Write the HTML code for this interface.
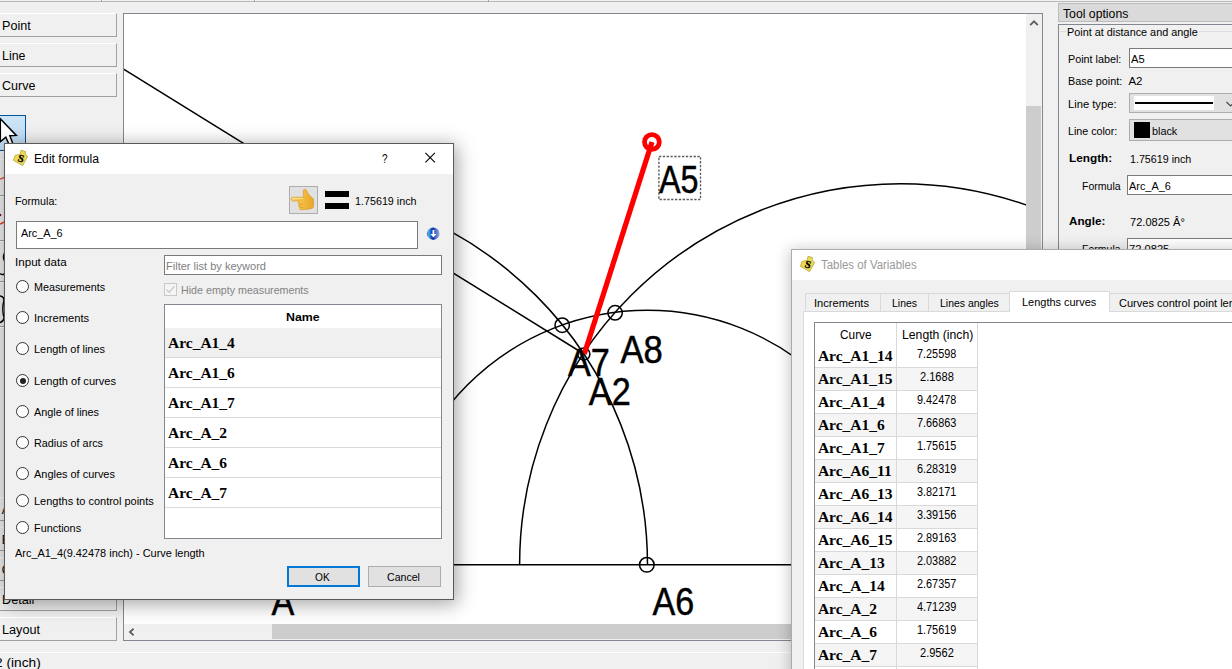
<!DOCTYPE html>
<html lang="en">
<head>
<meta charset="utf-8">
<title>Edit formula</title>
<style>
html,body{margin:0;padding:0;background:#f0f0f0;}
body{width:1232px;height:669px;overflow:hidden;background:#f0f0f0;position:relative;
  font-family:"Liberation Sans",sans-serif;font-size:12px;color:#000;}
.a{position:absolute;box-sizing:border-box;}
.t{position:absolute;white-space:nowrap;line-height:1;transform-origin:0 50%;}
.b{font-weight:bold;}
.ser{font-family:"Liberation Serif",serif;font-weight:bold;}
.tab{position:absolute;left:-2px;width:119px;height:24px;box-sizing:border-box;background:#f0f0f0;
  border-top:1px solid #fff;border-left:1px solid #fff;border-right:1px solid #a0a0a0;border-bottom:1px solid #a0a0a0;}
.inp{position:absolute;box-sizing:border-box;background:#fff;border:1px solid #7a7a7a;}
.radio{position:absolute;width:13px;height:13px;box-sizing:border-box;border:1px solid #333;border-radius:50%;background:#fff;left:16px;}
.hl{position:absolute;height:1px;background:#d9d9d9;}
</style>
</head>
<body>
<!-- main window -->
<div class="a" style="left:0;top:1px;width:1232px;height:1px;background:#b9b9b9;"></div>
<div class="a" style="left:101px;top:0;width:1px;height:2px;background:#a0a0a0;"></div><div class="a" style="left:102px;top:0;width:1px;height:1px;background:#fff;"></div>
<div class="a" style="left:254px;top:0;width:1px;height:2px;background:#a0a0a0;"></div><div class="a" style="left:255px;top:0;width:1px;height:1px;background:#fff;"></div>
<div class="a" style="left:488px;top:0;width:1px;height:2px;background:#a0a0a0;"></div><div class="a" style="left:489px;top:0;width:1px;height:1px;background:#fff;"></div>
<div class="tab" style="top:13px;"></div>
<div class="tab" style="top:43px;"></div>
<div class="tab" style="top:73px;"></div>
<div class="tab" style="top:497px;"></div>
<div class="tab" style="top:527px;"></div>
<div class="tab" style="top:557px;"></div>
<div class="tab" style="top:587px;"></div>
<div class="tab" style="top:617px;"></div>
<div class="a" style="left:-2px;top:115px;width:28px;height:36px;background:linear-gradient(#cce4f7,#c2dcf3);border:1px solid #00559b;"></div>
<svg class="a" style="left:0;top:114px;" width="20" height="34" viewBox="0 114 20 34"><path d="M0.3 118.8 L16.3 135.4 L9.9 135.8 L13.3 145 L9.3 145 L5.8 137.2 L0.3 141.8 Z" fill="#fff" stroke="#000" stroke-width="1.5" stroke-linejoin="miter"/></svg>
<div class="a" style="left:0;top:159px;width:6px;height:1px;background:#fbfbfb;"></div>
<div class="a" style="left:0;top:195px;width:6px;height:1px;background:#a0a0a0;"></div><div class="a" style="left:0;top:196px;width:6px;height:1px;background:#fff;"></div>
<div class="a" style="left:0;top:240px;width:6px;height:1px;background:#a0a0a0;"></div><div class="a" style="left:0;top:241px;width:6px;height:1px;background:#fff;"></div>
<div class="a" style="left:0;top:281px;width:6px;height:1px;background:#a0a0a0;"></div><div class="a" style="left:0;top:282px;width:6px;height:1px;background:#fff;"></div>
<div class="a" style="left:0;top:326px;width:6px;height:1px;background:#a0a0a0;"></div><div class="a" style="left:0;top:327px;width:6px;height:1px;background:#fff;"></div>
<svg class="a" style="left:0;top:150px;" width="6" height="190" viewBox="0 150 6 190"><g fill="none" stroke-width="1.4"><path d="M-1 179.4 Q2 178.6 5 177" stroke="#e8401c"/><path d="M-1 224.4 Q2 223.6 5 221.4" stroke="#e8401c"/><circle cx="0" cy="215" r="1.3" fill="#7a1010" stroke="none"/><path d="M4.5 253 Q2.5 257 4.5 261" stroke="#000"/><path d="M-1 273 Q2 275.5 5 274" stroke="#000"/><path d="M-1 296 Q3.5 296 4 300 Q1.5 310 4.2 318 Q3 322.5 -1 322.5" stroke="#000"/></g></svg>
<div class="t" style="left:1.8px;top:20.3px;font-size:12px;transform:scaleX(1.049);">Point</div>
<div class="t" style="left:1.8px;top:50.3px;font-size:12px;transform:scaleX(1.031);">Line</div>
<div class="t" style="left:1.8px;top:80.3px;font-size:12px;transform:scaleX(1.043);">Curve</div>
<div class="t" style="left:1.8px;top:504.3px;font-size:12px;">Arc</div>
<div class="t" style="left:1.8px;top:534.3px;font-size:12px;">Elliptical Arc</div>
<div class="t" style="left:1.8px;top:564.3px;font-size:12px;">Operations</div>
<div class="t" style="left:1.8px;top:594.3px;font-size:12px;transform:scaleX(1.056);">Detail</div>
<div class="t" style="left:1.8px;top:624.3px;font-size:12px;transform:scaleX(1.055);">Layout</div>
<div class="t" style="left:-5.2px;top:657.3px;font-size:12px;transform:scaleX(1.142);">2 (inch)</div>
<div class="a" id="canvas" style="left:123px;top:13px;width:920px;height:628px;background:#fff;border:1px solid #828790;overflow:hidden;"><svg class="a" style="left:0;top:0;" width="918" height="626" viewBox="124 14 918 626">
  <g fill="none" stroke="#000" stroke-width="1.5">
    <line x1="200" y1="564.8" x2="1000" y2="564.8"/>
    <line x1="60" y1="29.8" x2="584" y2="354"/>
    <path d="M647.5 564.7 A380.5 380.5 0 0 0 267 184.2"/>
    <path d="M519.6 564.7 A381 381 0 0 1 1281.6 564.7"/>
    <path d="M393.1 564.7 A254.4 254.4 0 0 1 901.9 564.7"/>
    <circle cx="646.8" cy="564.8" r="7.3"/>
    <circle cx="562.2" cy="325.2" r="7.2"/>
    <circle cx="615.1" cy="312.8" r="7.2"/>
    <circle cx="583.8" cy="354" r="6.1"/>
  </g>
  <line x1="584.3" y1="354" x2="652" y2="142" stroke="#f00" stroke-width="5.2"/>
  <circle cx="651.9" cy="142" r="7.4" fill="none" stroke="#f00" stroke-width="4.8"/>
  <rect x="658.9" y="156.5" width="41.6" height="43" fill="none" stroke="#5a5a5a" stroke-width="1.35" stroke-dasharray="2.3 1.55"/>
  <g font-family="'Liberation Sans',sans-serif" font-size="38.5" fill="#000" stroke="#000" stroke-width="0.5">
    <text x="659" y="192.7" textLength="39.5" lengthAdjust="spacingAndGlyphs">A5</text>
    <text x="567.9" y="375.6" textLength="41.9" lengthAdjust="spacingAndGlyphs">A7</text>
    <text x="620.5" y="362.6" textLength="42.3" lengthAdjust="spacingAndGlyphs">A8</text>
    <text x="588.8" y="404.7" textLength="41.9" lengthAdjust="spacingAndGlyphs">A2</text>
    <text x="652.6" y="614.7" textLength="41.7" lengthAdjust="spacingAndGlyphs">A6</text>
    <text x="271.4" y="614.9" textLength="22.8" lengthAdjust="spacingAndGlyphs">A</text>
  </g>
</svg>
<div class="a" style="left:902px;top:0;width:16px;height:610px;background:#f0f0f0;"></div>
<div class="a" style="left:902px;top:92px;width:15px;height:500px;background:#cdcdcd;"></div>
<svg class="a" style="left:902px;top:0;" width="16" height="17" viewBox="0 0 16 17"><path d="M4.2 11.2 L8 7.4 L11.8 11.2" fill="none" stroke="#606060" stroke-width="1.9"/></svg>
<div class="a" style="left:0;top:610px;width:918px;height:16px;background:#f0f0f0;"></div>
<div class="a" style="left:148px;top:610px;width:700px;height:15px;background:#cdcdcd;"></div>
<svg class="a" style="left:0;top:610px;" width="17" height="16" viewBox="0 0 17 16"><path d="M9.6 4.6 L6 8 L9.6 11.4" fill="none" stroke="#606060" stroke-width="1.9"/></svg>
</div>
<div class="a" style="left:0;top:652px;width:1232px;height:1px;background:#fff;"></div>
<!-- right panel -->
<div class="a" style="left:1058px;top:3px;width:180px;height:19px;background:#dadada;border:1px solid #bcbcbc;"></div>
<div class="a" style="left:1058px;top:24px;width:180px;height:400px;border:1px solid #828790;"></div>
<div class="hl" style="left:1060px;top:31px;width:6px;background:#dcdcdc;"></div><div class="hl" style="left:1199px;top:31px;width:40px;background:#dcdcdc;"></div>
<div class="inp" style="left:1129px;top:48px;width:110px;height:20px;"></div>
<div class="a" style="left:1129px;top:93px;width:110px;height:20px;background:#e1e1e1;border:1px solid #adadad;"></div>
<div class="a" style="left:1134px;top:96px;width:80px;height:14px;background:#fff;"></div>
<div class="a" style="left:1135px;top:102px;width:78px;height:2px;background:#000;"></div>
<svg class="a" style="left:1224.5px;top:99px;" width="10" height="10" viewBox="0 0 10 10"><path d="M1.5 3 L5.5 7 L9.5 3" fill="none" stroke="#444" stroke-width="1.1"/></svg>
<div class="a" style="left:1129px;top:119px;width:110px;height:22px;background:#e1e1e1;border:1px solid #adadad;"></div>
<div class="a" style="left:1134px;top:122px;width:16px;height:16px;background:#000;"></div>
<div class="inp" style="left:1127px;top:175px;width:110px;height:20px;"></div>
<div class="inp" style="left:1127px;top:238px;width:110px;height:20px;"></div>
<div class="t" style="left:1063.3px;top:8.3px;font-size:12px;transform:scaleX(1.020);">Tool options</div>
<div class="t" style="left:1067.1px;top:26.5px;font-size:11.5px;transform:scaleX(0.942);">Point at distance and angle</div>
<div class="t" style="left:1068.1px;top:53.5px;font-size:11.5px;transform:scaleX(0.938);">Point label:</div>
<div class="t" style="left:1131.3px;top:53.5px;font-size:11.5px;transform:scaleX(0.970);">A5</div>
<div class="t" style="left:1068.1px;top:75.5px;font-size:11.5px;transform:scaleX(0.944);">Base point:</div>
<div class="t" style="left:1128.4px;top:75.5px;font-size:11.5px;">A2</div>
<div class="t" style="left:1068.0px;top:98.5px;font-size:11.5px;transform:scaleX(0.973);">Line type:</div>
<div class="t" style="left:1068.1px;top:125.6px;font-size:11.5px;transform:scaleX(0.930);">Line color:</div>
<div class="t" style="left:1152.2px;top:125.6px;font-size:11.5px;transform:scaleX(0.940);">black</div>
<div class="t b" style="left:1068.5px;top:152.6px;font-size:11.5px;transform:scaleX(1.026);">Length:</div>
<div class="t" style="left:1129.6px;top:153.6px;font-size:11.5px;transform:scaleX(0.930);">1.75619 inch</div>
<div class="t" style="left:1082.0px;top:180.6px;font-size:11.5px;transform:scaleX(0.916);">Formula</div>
<div class="t" style="left:1129.3px;top:180.6px;font-size:11.5px;transform:scaleX(0.949);">Arc_A_6</div>
<div class="t b" style="left:1068.5px;top:215.6px;font-size:11.5px;transform:scaleX(1.016);">Angle:</div>
<div class="t" style="left:1129.5px;top:216.6px;font-size:11.5px;transform:scaleX(0.963);">72.0825 Â°</div>
<div class="t" style="left:1082.0px;top:243.6px;font-size:11.5px;transform:scaleX(0.916);">Formula</div>
<div class="t" style="left:1129.2px;top:243.6px;font-size:11.5px;transform:scaleX(0.970);">72.0825</div>
<!-- Tables of Variables -->
<div class="a" style="left:791px;top:249px;width:460px;height:440px;background:#f0f0f0;border:1px solid #ababab;box-shadow:0 2px 14px 1px rgba(0,0,0,0.24);"></div>
<div class="a" style="left:792px;top:250px;width:460px;height:30px;background:#fff;"></div>
<svg class="a" style="left:797px;top:252px;" width="22" height="22" viewBox="0 0 22 22">
<path d="M11.1 4.3 L15.4 5.6 L15.2 8.4 L17.6 10.4 L12.6 19.6 L3.4 14.3 L5.2 9.3 L10 8.6 Z" fill="#efdb52" stroke="#b3a235" stroke-width="0.8" stroke-linejoin="round"/>
<text x="8.2" y="16" font-family="'Liberation Serif',serif" font-weight="bold" font-size="10.5" fill="#000" stroke="#000" stroke-width="0.35" transform="rotate(16 11 12.6)">S</text>
</svg>
<div class="a" style="left:803px;top:311px;width:440px;height:371px;background:#fff;border:1px solid #d9d9d9;"></div>
<div class="a" style="left:805px;top:293px;width:76px;height:19px;background:#f0f0f0;border:1px solid #d9d9d9;"></div>
<div class="a" style="left:880px;top:293px;width:49px;height:19px;background:#f0f0f0;border:1px solid #d9d9d9;"></div>
<div class="a" style="left:928px;top:293px;width:82px;height:19px;background:#f0f0f0;border:1px solid #d9d9d9;"></div>
<div class="a" style="left:1109px;top:293px;width:140px;height:19px;background:#f0f0f0;border:1px solid #d9d9d9;"></div>
<div class="a" style="left:1009px;top:291px;width:101px;height:21px;background:#fff;border:1px solid #d9d9d9;border-bottom:none;"></div>
<div class="a" style="left:814px;top:322px;width:430px;height:360px;background:#fff;border:1px solid #828790;"></div>
<div class="hl" style="left:815px;top:367px;width:163px;"></div>
<div class="a" style="left:815px;top:368px;width:162px;height:23px;background:#f5f5f5;"></div>
<div class="hl" style="left:815px;top:390px;width:163px;"></div>
<div class="hl" style="left:815px;top:413px;width:163px;"></div>
<div class="a" style="left:815px;top:414px;width:162px;height:23px;background:#f5f5f5;"></div>
<div class="hl" style="left:815px;top:436px;width:163px;"></div>
<div class="hl" style="left:815px;top:459px;width:163px;"></div>
<div class="a" style="left:815px;top:460px;width:162px;height:23px;background:#f5f5f5;"></div>
<div class="hl" style="left:815px;top:482px;width:163px;"></div>
<div class="hl" style="left:815px;top:505px;width:163px;"></div>
<div class="a" style="left:815px;top:506px;width:162px;height:23px;background:#f5f5f5;"></div>
<div class="hl" style="left:815px;top:528px;width:163px;"></div>
<div class="hl" style="left:815px;top:551px;width:163px;"></div>
<div class="a" style="left:815px;top:552px;width:162px;height:23px;background:#f5f5f5;"></div>
<div class="hl" style="left:815px;top:574px;width:163px;"></div>
<div class="hl" style="left:815px;top:597px;width:163px;"></div>
<div class="a" style="left:815px;top:598px;width:162px;height:23px;background:#f5f5f5;"></div>
<div class="hl" style="left:815px;top:620px;width:163px;"></div>
<div class="hl" style="left:815px;top:643px;width:163px;"></div>
<div class="a" style="left:815px;top:644px;width:162px;height:23px;background:#f5f5f5;"></div>
<div class="hl" style="left:815px;top:666px;width:163px;"></div>
<div class="a" style="left:896px;top:323px;width:1px;height:346px;background:#d9d9d9;"></div>
<div class="a" style="left:977px;top:323px;width:1px;height:346px;background:#d9d9d9;"></div>
<div class="t" style="left:820.7px;top:259.3px;font-size:12px;transform:scaleX(0.952);color:#999;">Tables of Variables</div>
<div class="t" style="left:814.0px;top:297.6px;font-size:11.5px;transform:scaleX(0.966);">Increments</div>
<div class="t" style="left:891.8px;top:297.6px;font-size:11.5px;transform:scaleX(0.911);">Lines</div>
<div class="t" style="left:939.8px;top:297.6px;font-size:11.5px;transform:scaleX(0.911);">Lines angles</div>
<div class="t" style="left:1021.5px;top:296.6px;font-size:11.5px;transform:scaleX(0.953);">Lengths curves</div>
<div class="t" style="left:1119.0px;top:297.6px;font-size:11.5px;transform:scaleX(0.959);">Curves control point lengths</div>
<div class="t" style="left:840.0px;top:329.3px;font-size:12px;transform:scaleX(0.987);">Curve</div>
<div class="t" style="left:901.7px;top:329.3px;font-size:12px;transform:scaleX(1.018);">Length (inch)</div>
<div class="t ser" style="left:817.9px;top:348.1px;font-size:15.5px;">Arc_A1_14</div>
<div class="t" style="left:917.0px;top:348.3px;font-size:12px;transform:scaleX(0.906);">7.25598</div>
<div class="t ser" style="left:817.9px;top:371.1px;font-size:15.5px;">Arc_A1_15</div>
<div class="t" style="left:919.7px;top:371.3px;font-size:12px;transform:scaleX(0.921);">2.1688</div>
<div class="t ser" style="left:817.9px;top:394.1px;font-size:15.5px;">Arc_A1_4</div>
<div class="t" style="left:917.0px;top:394.3px;font-size:12px;transform:scaleX(0.906);">9.42478</div>
<div class="t ser" style="left:817.9px;top:417.1px;font-size:15.5px;">Arc_A1_6</div>
<div class="t" style="left:917.0px;top:417.3px;font-size:12px;transform:scaleX(0.906);">7.66863</div>
<div class="t ser" style="left:817.9px;top:440.1px;font-size:15.5px;">Arc_A1_7</div>
<div class="t" style="left:917.0px;top:440.3px;font-size:12px;transform:scaleX(0.906);">1.75615</div>
<div class="t ser" style="left:817.9px;top:463.1px;font-size:15.5px;">Arc_A6_11</div>
<div class="t" style="left:917.0px;top:463.3px;font-size:12px;transform:scaleX(0.906);">6.28319</div>
<div class="t ser" style="left:817.9px;top:486.1px;font-size:15.5px;">Arc_A6_13</div>
<div class="t" style="left:917.0px;top:486.3px;font-size:12px;transform:scaleX(0.906);">3.82171</div>
<div class="t ser" style="left:817.9px;top:509.0px;font-size:15.5px;">Arc_A6_14</div>
<div class="t" style="left:917.0px;top:509.3px;font-size:12px;transform:scaleX(0.906);">3.39156</div>
<div class="t ser" style="left:817.9px;top:532.0px;font-size:15.5px;">Arc_A6_15</div>
<div class="t" style="left:917.0px;top:532.3px;font-size:12px;transform:scaleX(0.906);">2.89163</div>
<div class="t ser" style="left:817.9px;top:555.0px;font-size:15.5px;">Arc_A_13</div>
<div class="t" style="left:917.0px;top:555.3px;font-size:12px;transform:scaleX(0.906);">2.03882</div>
<div class="t ser" style="left:817.9px;top:578.0px;font-size:15.5px;">Arc_A_14</div>
<div class="t" style="left:917.0px;top:578.3px;font-size:12px;transform:scaleX(0.906);">2.67357</div>
<div class="t ser" style="left:817.9px;top:601.0px;font-size:15.5px;">Arc_A_2</div>
<div class="t" style="left:917.0px;top:601.3px;font-size:12px;transform:scaleX(0.906);">4.71239</div>
<div class="t ser" style="left:817.9px;top:624.0px;font-size:15.5px;">Arc_A_6</div>
<div class="t" style="left:917.0px;top:624.3px;font-size:12px;transform:scaleX(0.906);">1.75619</div>
<div class="t ser" style="left:817.9px;top:647.0px;font-size:15.5px;">Arc_A_7</div>
<div class="t" style="left:919.7px;top:647.3px;font-size:12px;transform:scaleX(0.921);">2.9562</div>
<!-- Edit formula dialog -->
<div class="a" style="left:4px;top:143px;width:450px;height:457px;background:#f0f0f0;border:1px solid #5a5a5a;box-shadow:2px 3px 18px 1px rgba(0,0,0,0.36);"></div>
<div class="a" style="left:5px;top:144px;width:448px;height:30px;background:#fff;"></div>
<svg class="a" style="left:10px;top:146px;" width="22" height="22" viewBox="0 0 22 22">
<path d="M11.1 4.3 L15.4 5.6 L15.2 8.4 L17.6 10.4 L12.6 19.6 L3.4 14.3 L5.2 9.3 L10 8.6 Z" fill="#efdb52" stroke="#b3a235" stroke-width="0.8" stroke-linejoin="round"/>
<text x="8.2" y="16" font-family="'Liberation Serif',serif" font-weight="bold" font-size="10.5" fill="#000" stroke="#000" stroke-width="0.35" transform="rotate(16 11 12.6)">S</text>
</svg>
<div class="t" style="left:381.9px;top:151.8px;font-size:13.5px;transform:scaleX(0.74);">?</div>
<svg class="a" style="left:425px;top:152px;" width="11" height="11" viewBox="0 0 11 11"><path d="M0.4 0.9 L9.9 10.4 M9.9 0.9 L0.4 10.4" stroke="#000" stroke-width="1.1" fill="none"/></svg>
<div class="a" style="left:289px;top:186px;width:29px;height:28px;background:#e1e1e1;border:1px solid #adadad;"></div>
<svg class="a" style="left:289px;top:186px;" width="29" height="28" viewBox="289 186 29 28">
<defs><linearGradient id="hg" x1="0" y1="0" x2="1" y2="0"><stop offset="0" stop-color="#f9d468"/><stop offset="0.55" stop-color="#f2bb3e"/><stop offset="1" stop-color="#e9a52c"/></linearGradient></defs>
<path d="M291.2 199 C291.2 197.7 292 197.2 293 197.2 L303.6 197.2 L303.2 192 C303 190 304 189 305 189.2 C306.5 189.6 307 191.5 308 193.5 L310 196 C312 197.5 313.6 198.5 313.6 200 L313.6 206.5 C313.6 208 312 208.6 309 209 L301 209.8 C299.6 209.8 299.4 208.2 300 207.4 C298.4 207 298.2 205.2 299 204.4 C297.8 203.8 297.8 201.8 299.4 201 L293 201 C292 201 291.2 200.4 291.2 199 Z" fill="url(#hg)" stroke="#d99a2b" stroke-width="0.7"/>
<path d="M292.4 198.4 L303 198.4" stroke="#fde59a" stroke-width="0.9" fill="none"/>
<path d="M298.8 204.3 L302.6 204.3 M299.8 207.3 L303 207.3" stroke="#d39227" stroke-width="0.7" fill="none"/>
</svg>
<div class="a" style="left:325px;top:191px;width:24px;height:6px;background:#000;"></div>
<div class="a" style="left:325px;top:203px;width:24px;height:6px;background:#000;"></div>
<div class="inp" style="left:16px;top:221px;width:402px;height:28px;"></div>
<svg class="a" style="left:425px;top:225px;" width="17" height="17" viewBox="425 225 17 17">
<defs><linearGradient id="bg" x1="0" y1="0" x2="1" y2="0"><stop offset="0" stop-color="#1a3aa8"/><stop offset="0.13" stop-color="#3fc0f0"/><stop offset="0.32" stop-color="#1e56c2"/><stop offset="0.5" stop-color="#0d2ba0"/><stop offset="0.62" stop-color="#3a62c8"/><stop offset="1" stop-color="#9aa6dc"/></linearGradient></defs>
<circle cx="433.3" cy="233.7" r="6.2" fill="url(#bg)"/>
<path d="M432.5 230 L434.3 230 L434.3 234 L436.4 234 L433.4 237.6 L430.4 234 L432.5 234 Z" fill="#fff"/>
</svg>
<div class="inp" style="left:164px;top:255px;width:278px;height:20px;"></div>
<div class="a" style="left:164px;top:283px;width:13px;height:13px;background:#f4f4f4;border:1px solid #c8c8c8;"></div>
<svg class="a" style="left:164px;top:283px;" width="13" height="13" viewBox="0 0 13 13"><path d="M2.6 6.6 L5.2 9.2 L10.4 3.4" fill="none" stroke="#c4c4c4" stroke-width="1.2"/></svg>
<div class="radio" style="top:280.2px;"></div>
<div class="radio" style="top:311.1px;"></div>
<div class="radio" style="top:341.9px;"></div>
<div class="radio" style="top:374.2px;"></div>
<div class="a" style="left:19.5px;top:377.7px;width:6px;height:6px;border-radius:50%;background:#222;"></div>
<div class="radio" style="top:405.1px;"></div>
<div class="radio" style="top:435.9px;"></div>
<div class="radio" style="top:467.0px;"></div>
<div class="radio" style="top:493.8px;"></div>
<div class="radio" style="top:521.0px;"></div>
<div class="a" style="left:164px;top:304px;width:278px;height:235px;background:#fff;border:1px solid #828790;"></div>
<div class="a" style="left:165px;top:328px;width:276px;height:29px;background:#f0f0f0;"></div>
<div class="hl" style="left:165px;top:357px;width:276px;"></div>
<div class="hl" style="left:165px;top:387px;width:276px;"></div>
<div class="hl" style="left:165px;top:417px;width:276px;"></div>
<div class="hl" style="left:165px;top:447px;width:276px;"></div>
<div class="hl" style="left:165px;top:477px;width:276px;"></div>
<div class="hl" style="left:165px;top:507px;width:276px;"></div>
<div class="a" style="left:287px;top:566px;width:73px;height:21px;background:#e1e1e1;border:2px solid #0078d7;"></div>
<div class="a" style="left:368px;top:566px;width:73px;height:21px;background:#e1e1e1;border:1px solid #adadad;"></div>
<div class="t" style="left:34.1px;top:153.3px;font-size:12px;transform:scaleX(1.015);">Edit formula</div>
<div class="t" style="left:15.3px;top:195.6px;font-size:11.5px;transform:scaleX(0.933);">Formula:</div>
<div class="t" style="left:355.1px;top:195.6px;font-size:11.5px;transform:scaleX(0.934);">1.75619 inch</div>
<div class="t" style="left:20.5px;top:227.6px;font-size:11.5px;transform:scaleX(0.944);">Arc_A_6</div>
<div class="t" style="left:15.2px;top:256.6px;font-size:11.5px;transform:scaleX(1.010);">Input data</div>
<div class="t" style="left:165.8px;top:260.6px;font-size:11.5px;transform:scaleX(0.960);color:#808080;">Filter list by keyword</div>
<div class="t" style="left:181.0px;top:284.6px;font-size:11.5px;transform:scaleX(0.929);color:#838383;">Hide empty measurements</div>
<div class="t b" style="left:286.0px;top:311.6px;font-size:11.5px;transform:scaleX(1.074);">Name</div>
<div class="t" style="left:33.9px;top:281.6px;font-size:11.5px;transform:scaleX(0.934);">Measurements</div>
<div class="t" style="left:33.8px;top:312.6px;font-size:11.5px;transform:scaleX(0.969);">Increments</div>
<div class="t" style="left:33.9px;top:343.6px;font-size:11.5px;transform:scaleX(0.948);">Length of lines</div>
<div class="t" style="left:33.8px;top:375.6px;font-size:11.5px;transform:scaleX(0.965);">Length of curves</div>
<div class="t" style="left:33.9px;top:406.6px;font-size:11.5px;transform:scaleX(0.942);">Angle of lines</div>
<div class="t" style="left:33.9px;top:437.6px;font-size:11.5px;transform:scaleX(0.939);">Radius of arcs</div>
<div class="t" style="left:33.9px;top:468.6px;font-size:11.5px;transform:scaleX(0.952);">Angles of curves</div>
<div class="t" style="left:33.9px;top:495.6px;font-size:11.5px;transform:scaleX(0.956);">Lengths to control points</div>
<div class="t" style="left:33.9px;top:522.5px;font-size:11.5px;transform:scaleX(0.944);">Functions</div>
<div class="t ser" style="left:168.0px;top:335.1px;font-size:15.5px;">Arc_A1_4</div>
<div class="t ser" style="left:168.0px;top:365.1px;font-size:15.5px;">Arc_A1_6</div>
<div class="t ser" style="left:168.0px;top:395.1px;font-size:15.5px;">Arc_A1_7</div>
<div class="t ser" style="left:168.0px;top:425.1px;font-size:15.5px;">Arc_A_2</div>
<div class="t ser" style="left:168.0px;top:455.1px;font-size:15.5px;">Arc_A_6</div>
<div class="t ser" style="left:168.0px;top:485.1px;font-size:15.5px;">Arc_A_7</div>
<div class="t" style="left:15.4px;top:547.5px;font-size:11.5px;transform:scaleX(0.951);">Arc_A1_4(9.42478 inch) - Curve length</div>
<div class="t" style="left:315.1px;top:571.5px;font-size:11.5px;transform:scaleX(0.887);">OK</div>
<div class="t" style="left:386.8px;top:571.5px;font-size:11.5px;transform:scaleX(0.920);">Cancel</div>
</body>
</html>
